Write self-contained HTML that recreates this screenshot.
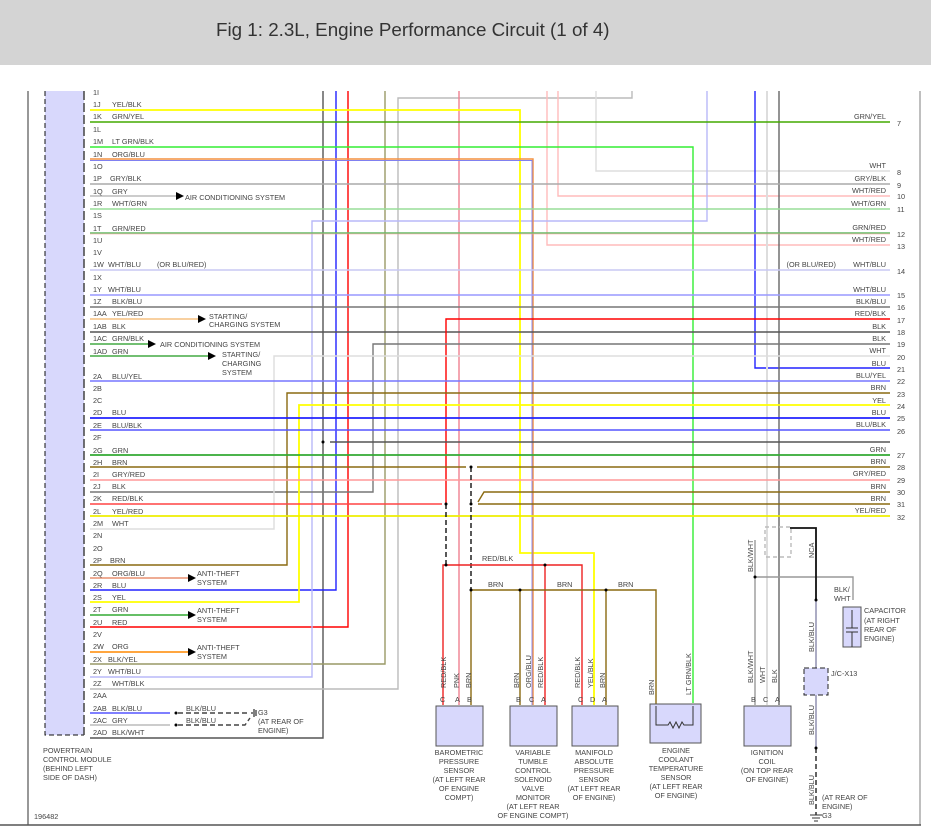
<!DOCTYPE html>
<html><head><meta charset="utf-8"><style>
html,body{margin:0;padding:0;background:#fff;width:931px;height:839px;overflow:hidden}
#hd{position:absolute;left:0;top:0;width:931px;height:65px;background:#d4d4d4}
#hd span{position:absolute;left:216px;top:19px;font:18.8px "Liberation Sans",sans-serif;color:#333}
svg{position:absolute;left:0;top:0}
text{font-family:"Liberation Sans",sans-serif;font-size:7.3px;fill:#444}
</style></head><body>
<div id="hd"><span>Fig 1: 2.3L, Engine Performance Circuit (1 of 4)</span></div>
<svg width="931" height="839" viewBox="0 0 931 839">
<line x1="28" y1="91" x2="28" y2="825" stroke="#777" stroke-width="1.5"/>
<line x1="920" y1="91" x2="920" y2="825" stroke="#aaa" stroke-width="1.5"/>
<line x1="0" y1="825" x2="921" y2="825" stroke="#555" stroke-width="1.5"/>
<rect x="45" y="91" width="39" height="644" fill="#d8d8fc"/>
<path d="M45 91V735H84" fill="none" stroke="#111" stroke-dasharray="5,3"/>
<path d="M84 91V735" stroke="#444" stroke-dasharray="9,3" stroke-width="1.5"/>
<g fill="none" stroke-width="1.4">
<path d="M323 91V738H90" stroke="#555"/>
<path d="M336 91V590H90" stroke="#22f"/>
<path d="M348 91V627H90" stroke="#f00"/>
<path d="M385 91V664H90" stroke="#999966"/>
<path d="M632 91V98H398V689H90" stroke="#bbb"/>
<path d="M459 91V705" stroke="#f08090"/>
<path d="M547 91V245H890" stroke="#fbb"/>
<path d="M558 91V196H890" stroke="#fbb"/>
<path d="M596 91V171H890" stroke="#ddd"/>
<path d="M707 91V221H312V677H90" stroke="#b8b8f8"/>
<path d="M755 91V368H890" stroke="#22f"/>
<path d="M767 91V705" stroke="#ddd" stroke-width="2"/>
<path d="M779 91V705" stroke="#666"/>
<path d="M90 110H520V553H594V705" stroke="#ff0" stroke-width="1.8"/>
<path d="M90 122H890" stroke="#44aa00"/>
<path d="M90 147H693V703" stroke="#33ee33"/>
<path d="M90 159H533V705" stroke="#f39040"/>
<path d="M90 160.5H532V705" stroke="#8080f0" stroke-width="0.9"/>
<path d="M90 184H890" stroke="#aaa"/>
<path d="M90 196H178" stroke="#bbb"/>
<path d="M90 209H890" stroke="#9d9"/>
<path d="M90 233H890" stroke="#6b6"/>
<path d="M90 234H890" stroke="#f99" stroke-width="0.6"/>
<path d="M90 270H890" stroke="#c8c8f4"/>
<path d="M90 295H890" stroke="#99f"/>
<path d="M90 307H890" stroke="#777"/>
<path d="M90 319H200" stroke="#f5c080"/>
<path d="M90 332H890" stroke="#555"/>
<path d="M90 344H150" stroke="#4a4"/>
<path d="M90 356H210" stroke="#4a4"/>
<path d="M446 504V319H890" stroke="#f00"/>
<path d="M890 344H373V492H90" stroke="#777"/>
<path d="M890 356H274V529H90" stroke="#ddd"/>
<path d="M90 381H890" stroke="#77f"/>
<path d="M890 393H287V565H90" stroke="#8a6a10"/>
<path d="M890 405H299V602H90" stroke="#ff0" stroke-width="1.8"/>
<path d="M90 418H890" stroke="#22f" stroke-width="1.8"/>
<path d="M90 430H890" stroke="#55f"/>
<path d="M330 442H890" stroke="#555"/>
<path d="M90 455H890" stroke="#3a3" stroke-width="1.8"/>
<path d="M90 467H466M477 467H890" stroke="#8a6a10"/>
<path d="M90 480H890" stroke="#f99"/>
<path d="M90 504H442" stroke="#f44"/>
<path d="M478 502L484 492H890M478 504H890" stroke="#8a6a10"/>
<path d="M90 516H890" stroke="#ee0" stroke-width="1.8"/>
<path d="M90 578H190" stroke="#e89070"/>
<path d="M90 615H190" stroke="#3a3"/>
<path d="M90 652H190" stroke="#f80"/>
<path d="M90 713H170" stroke="#55f"/>
<path d="M90 725H170" stroke="#bbb"/>
<path d="M446 504V565M471 467V590" stroke="#111" stroke-dasharray="5,3"/>
<path d="M443 705V565H582V705M545 565V705" stroke="#e22"/>
<path d="M471 705V590H656V705M520 590V705M606 590V705" stroke="#8a6a10"/>
<path d="M755 705V577H853V600" stroke="#999"/>
<path d="M755 577V540" stroke="#999"/>
<path d="M790 528H816V600" stroke="#111" stroke-width="1.8"/>
<path d="M816 600V748" stroke="#88a"/>
<path d="M816 748V815" stroke="#222" stroke-dasharray="5,3"/>
<rect x="765" y="527" width="26" height="30" stroke="#bbb" stroke-dasharray="4,3"/>
<path d="M178 713H250M178 725H245L250 718" stroke="#444" stroke-dasharray="5,3"/>
</g>
<g fill="#000">
<path d="M176 192l8 4-8 4z"/><path d="M198 315l8 4-8 4z"/><path d="M148 340l8 4-8 4z"/><path d="M208 352l8 4-8 4z"/>
<path d="M188 574l8 4-8 4z"/><path d="M188 611l8 4-8 4z"/><path d="M188 648l8 4-8 4z"/>
<circle cx="323" cy="442" r="1.5"/><circle cx="446" cy="504" r="1.5"/><circle cx="471" cy="504" r="1.5"/><circle cx="471" cy="467" r="1.5"/>
<circle cx="446" cy="565" r="1.5"/><circle cx="545" cy="565" r="1.5"/><circle cx="471" cy="590" r="1.5"/><circle cx="520" cy="590" r="1.5"/><circle cx="606" cy="590" r="1.5"/>
<circle cx="755" cy="577" r="1.5"/><circle cx="816" cy="600" r="1.5"/><circle cx="816" cy="748" r="1.5"/><circle cx="176" cy="713" r="1.5"/><circle cx="176" cy="725" r="1.5"/>
</g>
<path d="M251 713h2M254 709v8M256 710v6" stroke="#000"/>
<g fill="#d8d8fc" stroke="#555">
<rect x="436" y="706" width="47" height="40"/><rect x="510" y="706" width="47" height="40"/><rect x="572" y="706" width="46" height="40"/>
<rect x="650" y="704" width="51" height="39"/><rect x="744" y="706" width="47" height="40"/>
<rect x="843" y="607" width="18" height="40"/>
<rect x="804" y="668" width="24" height="27" stroke="#222" stroke-dasharray="5,3"/>
</g>
<path d="M656 706V725H668l2-3 3 6 3-6 3 6 3-6 2 3H693V706" fill="none" stroke="#333"/>
<path d="M852 610V628M846 628h12M846 632h12M852 632V647" stroke="#333" fill="none"/>
<g>
<text x="93" y="95">1I</text>
<text x="93" y="107">1J</text><text x="112" y="107">YEL/BLK</text>
<text x="93" y="119">1K</text><text x="112" y="119">GRN/YEL</text>
<text x="93" y="132">1L</text>
<text x="93" y="144">1M</text><text x="112" y="144">LT GRN/BLK</text>
<text x="93" y="157">1N</text><text x="112" y="157">ORG/BLU</text>
<text x="93" y="169">1O</text>
<text x="93" y="181">1P</text><text x="110" y="181">GRY/BLK</text>
<text x="93" y="194">1Q</text><text x="112" y="194">GRY</text>
<text x="93" y="206">1R</text><text x="112" y="206">WHT/GRN</text>
<text x="93" y="218">1S</text>
<text x="93" y="231">1T</text><text x="112" y="231">GRN/RED</text>
<text x="93" y="243">1U</text>
<text x="93" y="255">1V</text>
<text x="93" y="267">1W</text><text x="108" y="267">WHT/BLU</text><text x="157" y="267">(OR BLU/RED)</text>
<text x="93" y="280">1X</text>
<text x="93" y="292">1Y</text><text x="108" y="292">WHT/BLU</text>
<text x="93" y="304">1Z</text><text x="112" y="304">BLK/BLU</text>
<text x="93" y="316">1AA</text><text x="112" y="316">YEL/RED</text>
<text x="93" y="329">1AB</text><text x="112" y="329">BLK</text>
<text x="93" y="341">1AC</text><text x="112" y="341">GRN/BLK</text>
<text x="93" y="354">1AD</text><text x="112" y="354">GRN</text>
<text x="93" y="379">2A</text><text x="112" y="379">BLU/YEL</text>
<text x="93" y="391">2B</text><text x="93" y="403">2C</text>
<text x="93" y="415">2D</text><text x="112" y="415">BLU</text>
<text x="93" y="428">2E</text><text x="112" y="428">BLU/BLK</text>
<text x="93" y="440">2F</text>
<text x="93" y="453">2G</text><text x="112" y="453">GRN</text>
<text x="93" y="465">2H</text><text x="112" y="465">BRN</text>
<text x="93" y="477">2I</text><text x="112" y="477">GRY/RED</text>
<text x="93" y="489">2J</text><text x="112" y="489">BLK</text>
<text x="93" y="501">2K</text><text x="112" y="501">RED/BLK</text>
<text x="93" y="514">2L</text><text x="112" y="514">YEL/RED</text>
<text x="93" y="526">2M</text><text x="112" y="526">WHT</text>
<text x="93" y="538">2N</text><text x="93" y="551">2O</text>
<text x="93" y="563">2P</text><text x="110" y="563">BRN</text>
<text x="93" y="576">2Q</text><text x="112" y="576">ORG/BLU</text>
<text x="93" y="588">2R</text><text x="112" y="588">BLU</text>
<text x="93" y="600">2S</text><text x="112" y="600">YEL</text>
<text x="93" y="612">2T</text><text x="112" y="612">GRN</text>
<text x="93" y="625">2U</text><text x="112" y="625">RED</text>
<text x="93" y="637">2V</text>
<text x="93" y="649">2W</text><text x="112" y="649">ORG</text>
<text x="93" y="662">2X</text><text x="108" y="662">BLK/YEL</text>
<text x="93" y="674">2Y</text><text x="108" y="674">WHT/BLU</text>
<text x="93" y="686">2Z</text><text x="112" y="686">WHT/BLK</text>
<text x="93" y="698">2AA</text>
<text x="93" y="711">2AB</text><text x="112" y="711">BLK/BLU</text>
<text x="93" y="723">2AC</text><text x="112" y="723">GRY</text>
<text x="93" y="735">2AD</text><text x="112" y="735">BLK/WHT</text>
<text x="185" y="200">AIR CONDITIONING SYSTEM</text>
<text x="209" y="319">STARTING/</text><text x="209" y="327">CHARGING SYSTEM</text>
<text x="160" y="347">AIR CONDITIONING SYSTEM</text>
<text x="222" y="357">STARTING/</text><text x="222" y="366">CHARGING</text><text x="222" y="375">SYSTEM</text>
<text x="197" y="576">ANTI-THEFT</text><text x="197" y="585">SYSTEM</text>
<text x="197" y="613">ANTI-THEFT</text><text x="197" y="622">SYSTEM</text>
<text x="197" y="650">ANTI-THEFT</text><text x="197" y="659">SYSTEM</text>
<text x="186" y="711">BLK/BLU</text><text x="186" y="723">BLK/BLU</text>
<text x="258" y="715">G3</text><text x="258" y="724">(AT REAR OF</text><text x="258" y="733">ENGINE)</text>
<text x="43" y="753">POWERTRAIN</text><text x="43" y="762">CONTROL MODULE</text><text x="43" y="771">(BEHIND LEFT</text><text x="43" y="780">SIDE OF DASH)</text>
<text x="34" y="819">196482</text>
</g>
<g text-anchor="end">
<text x="886" y="119">GRN/YEL</text><text x="886" y="168">WHT</text><text x="886" y="181">GRY/BLK</text>
<text x="886" y="193">WHT/RED</text><text x="886" y="206">WHT/GRN</text><text x="886" y="230">GRN/RED</text>
<text x="886" y="242">WHT/RED</text><text x="886" y="267">WHT/BLU</text><text x="836" y="267">(OR BLU/RED)</text>
<text x="886" y="292">WHT/BLU</text><text x="886" y="304">BLK/BLU</text><text x="886" y="316">RED/BLK</text>
<text x="886" y="329">BLK</text><text x="886" y="341">BLK</text><text x="886" y="353">WHT</text>
<text x="886" y="366">BLU</text><text x="886" y="378">BLU/YEL</text><text x="886" y="390">BRN</text>
<text x="886" y="403">YEL</text><text x="886" y="415">BLU</text><text x="886" y="427">BLU/BLK</text>
<text x="886" y="452">GRN</text><text x="886" y="464">BRN</text><text x="886" y="476">GRY/RED</text>
<text x="886" y="489">BRN</text><text x="886" y="501">BRN</text><text x="886" y="513">YEL/RED</text>
</g>
<g>
<text x="897" y="126">7</text><text x="897" y="175">8</text><text x="897" y="188">9</text><text x="897" y="199">10</text><text x="897" y="212">11</text>
<text x="897" y="237">12</text><text x="897" y="249">13</text><text x="897" y="274">14</text><text x="897" y="298">15</text><text x="897" y="310">16</text>
<text x="897" y="323">17</text><text x="897" y="335">18</text><text x="897" y="347">19</text><text x="897" y="360">20</text><text x="897" y="372">21</text>
<text x="897" y="384">22</text><text x="897" y="397">23</text><text x="897" y="409">24</text><text x="897" y="421">25</text><text x="897" y="434">26</text>
<text x="897" y="458">27</text><text x="897" y="470">28</text><text x="897" y="483">29</text><text x="897" y="495">30</text><text x="897" y="507">31</text><text x="897" y="520">32</text>
</g>
<text x="482" y="561">RED/BLK</text><text x="488" y="587">BRN</text><text x="557" y="587">BRN</text><text x="618" y="587">BRN</text>
<g>
<text transform="translate(446,688) rotate(-90)">RED/BLK</text><text transform="translate(459,688) rotate(-90)">PNK</text><text transform="translate(471,688) rotate(-90)">BRN</text>
<text transform="translate(519,688) rotate(-90)">BRN</text><text transform="translate(531,688) rotate(-90)">ORG/BLU</text><text transform="translate(543,688) rotate(-90)">RED/BLK</text>
<text transform="translate(580,688) rotate(-90)">RED/BLK</text><text transform="translate(593,688) rotate(-90)">YEL/BLK</text><text transform="translate(605,688) rotate(-90)">BRN</text>
<text transform="translate(654,695) rotate(-90)">BRN</text><text transform="translate(691,695) rotate(-90)">LT GRN/BLK</text>
<text transform="translate(753,683) rotate(-90)">BLK/WHT</text><text transform="translate(765,683) rotate(-90)">WHT</text><text transform="translate(777,683) rotate(-90)">BLK</text>
<text transform="translate(753,572) rotate(-90)">BLK/WHT</text><text transform="translate(814,558) rotate(-90)">NCA</text>
<text transform="translate(814,652) rotate(-90)">BLK/BLU</text><text transform="translate(814,735) rotate(-90)">BLK/BLU</text><text transform="translate(814,805) rotate(-90)">BLK/BLU</text>
<text x="440" y="702">C</text><text x="455" y="702">A</text><text x="467" y="702">B</text>
<text x="516" y="702">B</text><text x="529" y="702">C</text><text x="541" y="702">A</text>
<text x="578" y="702">C</text><text x="590" y="702">D</text><text x="602" y="702">A</text>
<text x="751" y="702">B</text><text x="763" y="702">C</text><text x="775" y="702">A</text>
</g>
<g text-anchor="middle">
<text x="459" y="755">BAROMETRIC</text><text x="459" y="764">PRESSURE</text><text x="459" y="773">SENSOR</text><text x="459" y="782">(AT LEFT REAR</text><text x="459" y="791">OF ENGINE</text><text x="459" y="800">COMPT)</text>
<text x="533" y="755">VARIABLE</text><text x="533" y="764">TUMBLE</text><text x="533" y="773">CONTROL</text><text x="533" y="782">SOLENOID</text><text x="533" y="791">VALVE</text><text x="533" y="800">MONITOR</text><text x="533" y="809">(AT LEFT REAR</text><text x="533" y="818">OF ENGINE COMPT)</text>
<text x="594" y="755">MANIFOLD</text><text x="594" y="764">ABSOLUTE</text><text x="594" y="773">PRESSURE</text><text x="594" y="782">SENSOR</text><text x="594" y="791">(AT LEFT REAR</text><text x="594" y="800">OF ENGINE)</text>
<text x="676" y="753">ENGINE</text><text x="676" y="762">COOLANT</text><text x="676" y="771">TEMPERATURE</text><text x="676" y="780">SENSOR</text><text x="676" y="789">(AT LEFT REAR</text><text x="676" y="798">OF ENGINE)</text>
<text x="767" y="755">IGNITION</text><text x="767" y="764">COIL</text><text x="767" y="773">(ON TOP REAR</text><text x="767" y="782">OF ENGINE)</text>
</g>
<text x="834" y="592">BLK/</text><text x="834" y="601">WHT</text>
<text x="864" y="613">CAPACITOR</text><text x="864" y="623">(AT RIGHT</text><text x="864" y="632">REAR OF</text><text x="864" y="641">ENGINE)</text>
<text x="831" y="676">J/C-X13</text>
<text x="822" y="800">(AT REAR OF</text><text x="822" y="809">ENGINE)</text><text x="822" y="818">G3</text>
<path d="M810 815h12M812 818h8M814 821h4" stroke="#333"/>
</svg>
</body></html>
